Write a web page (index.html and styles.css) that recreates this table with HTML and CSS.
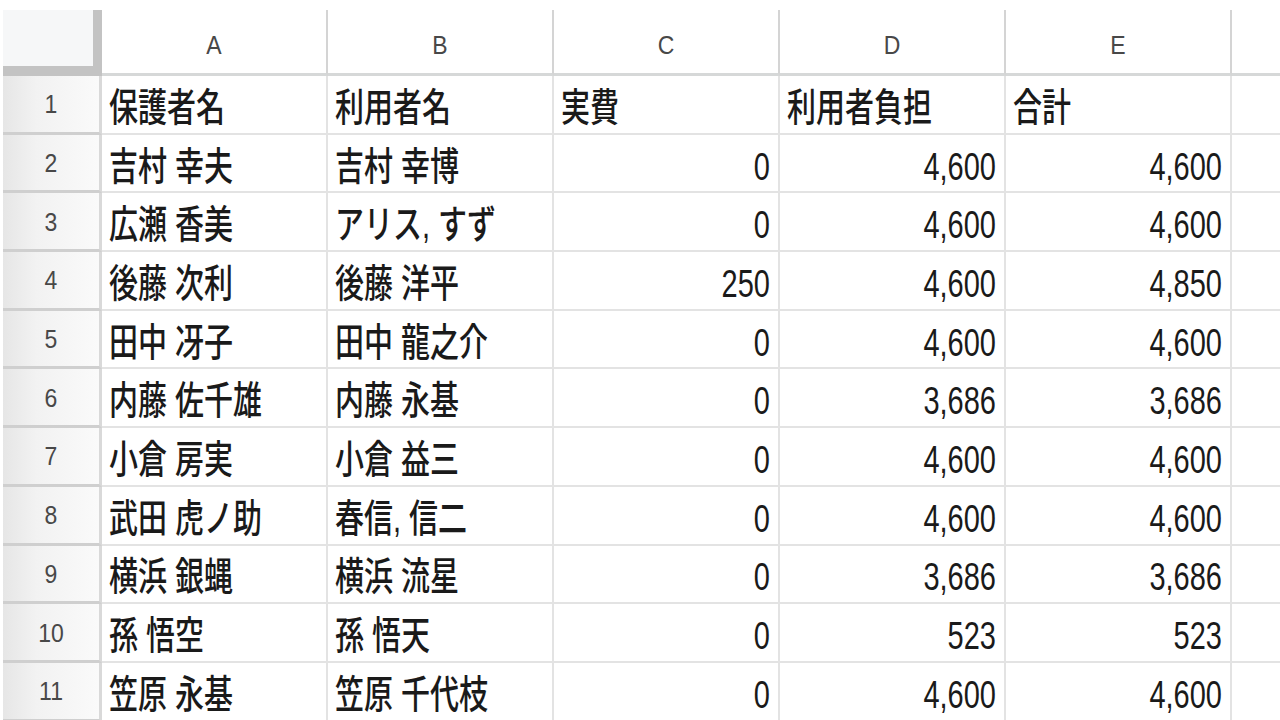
FILE: index.html
```html
<!DOCTYPE html>
<html lang="ja">
<head>
<meta charset="utf-8">
<title>Sheet</title>
<link rel="stylesheet" href="styles.css">
</head>
<body>
<div class="sheet">
  <div class="corner"></div>
  <div class="colhead"><span class="hl">A</span></div>
  <div class="colhead"><span class="hl">B</span></div>
  <div class="colhead"><span class="hl">C</span></div>
  <div class="colhead"><span class="hl">D</span></div>
  <div class="colhead"><span class="hl">E</span></div>
  <div class="colhead last"></div>

  <div class="rowhead"><span class="hl">1</span></div>
  <div class="cell"><span class="t">保護者名</span></div>
  <div class="cell"><span class="t">利用者名</span></div>
  <div class="cell"><span class="t">実費</span></div>
  <div class="cell"><span class="t">利用者負担</span></div>
  <div class="cell"><span class="t">合計</span></div>
  <div class="cell last"></div>

  <div class="rowhead"><span class="hl">2</span></div>
  <div class="cell"><span class="t">吉村 幸夫</span></div>
  <div class="cell"><span class="t">吉村 幸博</span></div>
  <div class="cell num"><span class="t">0</span></div>
  <div class="cell num"><span class="t">4,600</span></div>
  <div class="cell num"><span class="t">4,600</span></div>
  <div class="cell last"></div>

  <div class="rowhead"><span class="hl">3</span></div>
  <div class="cell"><span class="t">広瀬 香美</span></div>
  <div class="cell"><span class="t">アリス, すず</span></div>
  <div class="cell num"><span class="t">0</span></div>
  <div class="cell num"><span class="t">4,600</span></div>
  <div class="cell num"><span class="t">4,600</span></div>
  <div class="cell last"></div>

  <div class="rowhead"><span class="hl">4</span></div>
  <div class="cell"><span class="t">後藤 次利</span></div>
  <div class="cell"><span class="t">後藤 洋平</span></div>
  <div class="cell num"><span class="t">250</span></div>
  <div class="cell num"><span class="t">4,600</span></div>
  <div class="cell num"><span class="t">4,850</span></div>
  <div class="cell last"></div>

  <div class="rowhead"><span class="hl">5</span></div>
  <div class="cell"><span class="t">田中 冴子</span></div>
  <div class="cell"><span class="t">田中 龍之介</span></div>
  <div class="cell num"><span class="t">0</span></div>
  <div class="cell num"><span class="t">4,600</span></div>
  <div class="cell num"><span class="t">4,600</span></div>
  <div class="cell last"></div>

  <div class="rowhead"><span class="hl">6</span></div>
  <div class="cell"><span class="t">内藤 佐千雄</span></div>
  <div class="cell"><span class="t">内藤 永基</span></div>
  <div class="cell num"><span class="t">0</span></div>
  <div class="cell num"><span class="t">3,686</span></div>
  <div class="cell num"><span class="t">3,686</span></div>
  <div class="cell last"></div>

  <div class="rowhead"><span class="hl">7</span></div>
  <div class="cell"><span class="t">小倉 房実</span></div>
  <div class="cell"><span class="t">小倉 益三</span></div>
  <div class="cell num"><span class="t">0</span></div>
  <div class="cell num"><span class="t">4,600</span></div>
  <div class="cell num"><span class="t">4,600</span></div>
  <div class="cell last"></div>

  <div class="rowhead"><span class="hl">8</span></div>
  <div class="cell"><span class="t">武田 虎ノ助</span></div>
  <div class="cell"><span class="t">春信, 信二</span></div>
  <div class="cell num"><span class="t">0</span></div>
  <div class="cell num"><span class="t">4,600</span></div>
  <div class="cell num"><span class="t">4,600</span></div>
  <div class="cell last"></div>

  <div class="rowhead"><span class="hl">9</span></div>
  <div class="cell"><span class="t">横浜 銀蝿</span></div>
  <div class="cell"><span class="t">横浜 流星</span></div>
  <div class="cell num"><span class="t">0</span></div>
  <div class="cell num"><span class="t">3,686</span></div>
  <div class="cell num"><span class="t">3,686</span></div>
  <div class="cell last"></div>

  <div class="rowhead"><span class="hl">10</span></div>
  <div class="cell"><span class="t">孫 悟空</span></div>
  <div class="cell"><span class="t">孫 悟天</span></div>
  <div class="cell num"><span class="t">0</span></div>
  <div class="cell num"><span class="t">523</span></div>
  <div class="cell num"><span class="t">523</span></div>
  <div class="cell last"></div>

  <div class="rowhead"><span class="hl">11</span></div>
  <div class="cell"><span class="t">笠原 永基</span></div>
  <div class="cell"><span class="t">笠原 千代枝</span></div>
  <div class="cell num"><span class="t">0</span></div>
  <div class="cell num"><span class="t">4,600</span></div>
  <div class="cell num"><span class="t">4,600</span></div>
  <div class="cell last"></div>
</div>
</body>
</html>
```
FILE: styles.css
```css
html, body {
  margin: 0;
  padding: 0;
  background: #ffffff;
  overflow: hidden;
  width: 1280px;
  height: 720px;
}

body {
  font-family: "Liberation Sans", Arial, "Noto Sans CJK JP", sans-serif;
  color: #222222;
}

.sheet {
  display: grid;
  grid-template-columns: 99px repeat(5, 226px) 1fr;
  grid-template-rows: 66px repeat(11, 58.7px);
  margin: 10px 0 0 3px;
}

.corner {
  box-sizing: border-box;
  background: #f6f7f8;
  border-right: 9px solid #c3c3c3;
  border-bottom: 11px solid #c3c3c3;
  margin-bottom: -1px;
}

.colhead {
  box-sizing: border-box;
  background: #ffffff;
  border-right: 2px solid #d4d4d4;
  border-bottom: 3px solid #d6d8d8;
  display: flex;
  align-items: center;
  justify-content: center;
  padding-top: 6px;
}

.colhead.last {
  border-right: none;
}

.rowhead {
  box-sizing: border-box;
  background: linear-gradient(to right, #e6e6e6 0%, #f2f2f2 35%, #fafafa 100%);
  border-right: 3px solid #d9d9d9;
  border-bottom: 3px solid #cfcfcf;
  display: flex;
  align-items: center;
  justify-content: center;
  padding-top: 1px;
}

.hl {
  display: inline-block;
  font-size: 23px;
  line-height: 26px;
  color: #484848;
  transform: scaleY(1.15);
}

.cell {
  box-sizing: border-box;
  border-right: 2px solid #e3e3e3;
  border-bottom: 2px solid #e3e3e3;
  display: flex;
  align-items: center;
  justify-content: flex-start;
  padding: 8px 8px 0 7px;
  overflow: hidden;
  white-space: nowrap;
}

.cell.num {
  justify-content: flex-end;
}

.cell.last {
  border-right: none;
}

.t {
  display: inline-block;
  font-size: 29px;
  line-height: 33px;
  font-weight: 500;
  color: #1a1a1a;
  transform: scaleY(1.33);
}
```
